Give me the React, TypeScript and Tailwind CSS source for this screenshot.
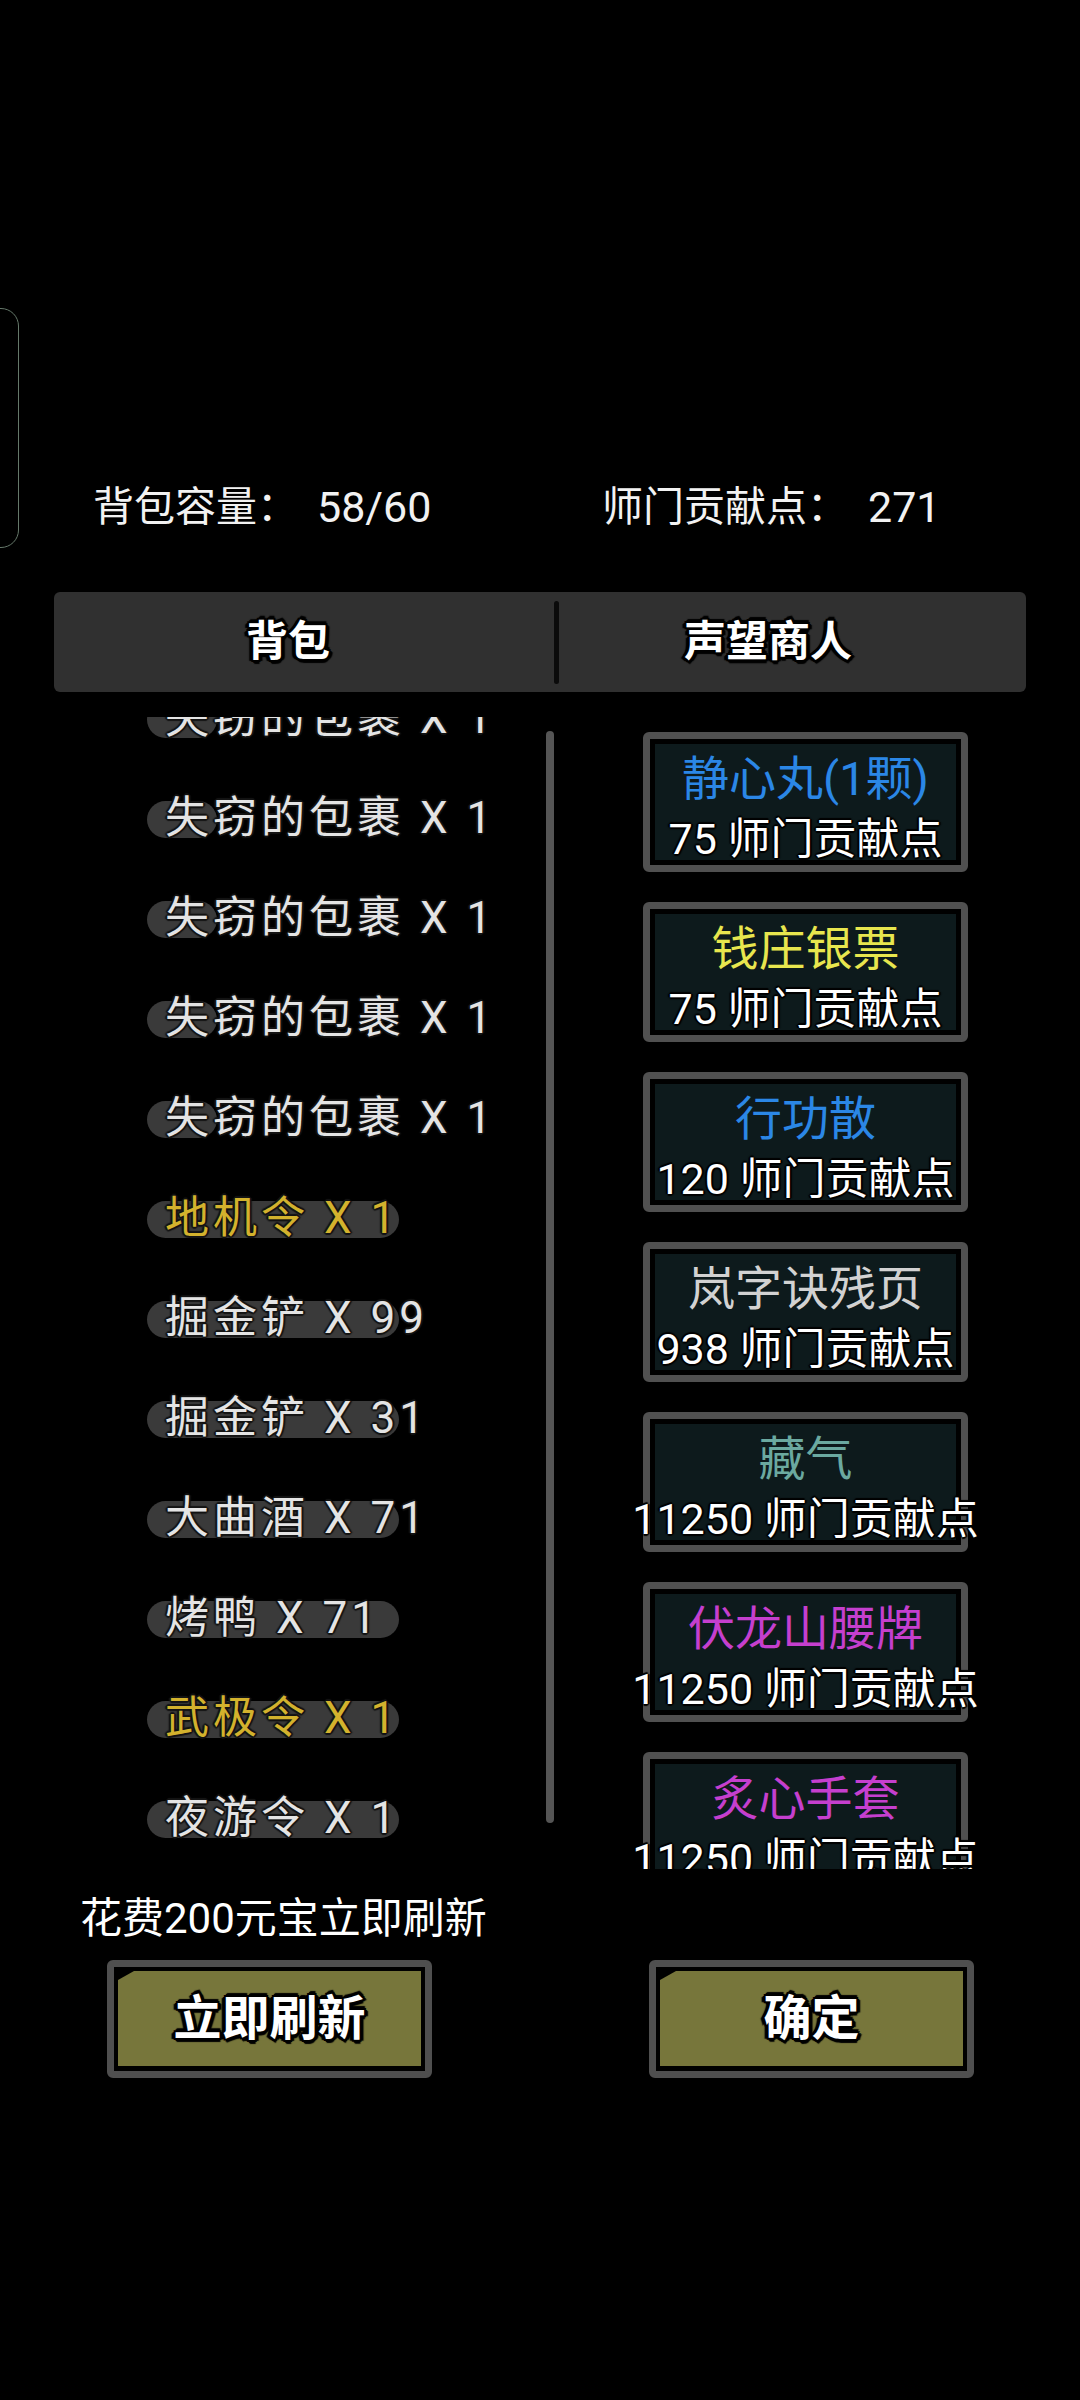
import React from "react";

const items: { name: string; gold?: boolean; pill: number }[] = [
  { name: "失窃的包裹 X 1", pill: 70 },
  { name: "失窃的包裹 X 1", pill: 70 },
  { name: "失窃的包裹 X 1", pill: 70 },
  { name: "失窃的包裹 X 1", pill: 70 },
  { name: "失窃的包裹 X 1", pill: 70 },
  { name: "地机令 X 1", gold: true, pill: 252 },
  { name: "掘金铲 X 99", pill: 252 },
  { name: "掘金铲 X 31", pill: 252 },
  { name: "大曲酒 X 71", pill: 252 },
  { name: "烤鸭 X 71", pill: 252 },
  { name: "武极令 X 1", gold: true, pill: 252 },
  { name: "夜游令 X 1", pill: 252 },
];

const goods: { name: string; color: string; price: string }[] = [
  { name: "静心丸(1颗)", color: "text-[#2b87e6]", price: "75 师门贡献点" },
  { name: "钱庄银票", color: "text-[#e8e64e]", price: "75 师门贡献点" },
  { name: "行功散", color: "text-[#2b87e6]", price: "120 师门贡献点" },
  { name: "岚字诀残页", color: "text-[#d2d2d2]", price: "938 师门贡献点" },
  { name: "藏气", color: "text-[#6ba9a0]", price: "11250 师门贡献点" },
  { name: "伏龙山腰牌", color: "text-[#c53fce]", price: "11250 师门贡献点" },
  { name: "炙心手套", color: "text-[#c53fce]", price: "11250 师门贡献点" },
];

const itemShadow =
  "[text-shadow:2px_0_1px_#141414,-2px_0_1px_#141414,0_2px_1px_#141414,0_-2px_1px_#141414,1px_1px_1px_#141414,-1px_-1px_1px_#141414,1px_-1px_1px_#141414,-1px_1px_1px_#141414]";
const strongShadow =
  "[text-shadow:3px_0_0_#000,-3px_0_0_#000,0_3px_0_#000,0_-3px_0_#000,2px_2px_0_#000,-2px_-2px_0_#000,2px_-2px_0_#000,-2px_2px_0_#000,4px_1px_1px_#000,-4px_1px_1px_#000,1px_4px_1px_#000,1px_-4px_1px_#000]";
const priceShadow =
  "[text-shadow:2px_0_1px_#000,-2px_0_1px_#000,0_2px_1px_#000,0_-2px_1px_#000,1px_1px_1px_#000,-1px_-1px_1px_#000]";

function OliveButton({ label }: { label: string }) {
  return (
    <div className="w-[325px] h-[118px] rounded-[6px] border-[7px] border-[#4f4f4f] bg-black px-[4px] pt-[4px] pb-[5px]">
      <div className="w-full h-full bg-[#77763b] [clip-path:polygon(16px_0,100%_0,100%_100%,0_100%,0_9px)] flex items-center justify-center">
        <span className={`text-[48px] leading-none font-bold text-white ${strongShadow}`}>{label}</span>
      </div>
    </div>
  );
}

export default function App() {
  return (
    <div className="relative w-[1080px] h-[2400px] bg-black overflow-hidden text-white font-['Roboto','Noto_Sans_CJK_SC',sans-serif]">
      {/* side element */}
      <div className="absolute left-[-40px] top-[308px] w-[59px] h-[240px] rounded-[18px] border-[1.5px] border-[#65786a]"></div>

      {/* header */}
      <div className="pt-[482px] flex h-[532px] items-center pl-[93px] text-[41px] leading-[50px] text-[#f2f2f2]">
        <div className="w-[509px] flex items-center">
          <span>背包容量：</span>
          <span className="ml-[19px] text-[43px]">58/60</span>
        </div>
        <div className="flex items-center">
          <span>师门贡献点：</span>
          <span className="ml-[20px] text-[43px]">271</span>
        </div>
      </div>

      {/* tabs */}
      <div className="mt-[60px] ml-[54px] w-[972px] h-[100px] rounded-[6px] bg-[#303030] flex items-center">
        <div className="w-[500px] flex justify-center pr-[32px]">
          <span className={`text-[42px] leading-none font-bold text-white ${strongShadow}`}>背包</span>
        </div>
        <div className="w-[5px] h-[83px] rounded-full bg-[#0b0b0b]"></div>
        <div className="flex-1 flex justify-center pr-[49px]">
          <span className={`text-[42px] leading-none font-bold text-white ${strongShadow}`}>声望商人</span>
        </div>
      </div>

      {/* lists */}
      <div className="mt-[25px] h-[1152px] flex">
        <div className="w-[546px] h-full overflow-hidden">
          <div className="-mt-[49px] flex flex-col">
            {items.map((it, i) => (
              <div key={i} className="h-[100px] flex items-center pl-[165px]">
                <span className="relative whitespace-nowrap">
                  <span
                    className="absolute -left-[18px] top-[9px] h-[37px] rounded-full bg-[#3a3a3a]"
                    style={{ width: it.pill }}
                  ></span>
                  <span
                    className={`relative text-[44px] leading-[52px] tracking-[4px] ${itemShadow} ${
                      it.gold ? "text-[#d3b22d]" : "text-[#e4e4e4]"
                    }`}
                  >
                    {it.name}
                  </span>
                </span>
              </div>
            ))}
          </div>
        </div>
        <div className="w-[8px] mt-[14px] h-[1092px] rounded-full bg-[#555555]"></div>
        <div className="ml-[69px] w-[365px] px-[20px] h-full overflow-hidden">
          <div className="pt-[15px] flex flex-col gap-[30px]">
            {goods.map((g, i) => (
              <div
                key={i}
                className="w-[325px] h-[140px] shrink-0 rounded-[6px] border-[7px] border-[#505050] bg-black p-[5px]"
              >
                <div className="w-full h-full bg-[#0d1a1c] flex flex-col items-center pt-[5px]">
                  <div className={`h-[60px] leading-[60px] text-[47px] whitespace-nowrap ${g.color}`}>{g.name}</div>
                  <div className={`h-[60px] leading-[60px] text-[43px] whitespace-nowrap text-white ${priceShadow}`}>
                    {g.price}
                  </div>
                </div>
              </div>
            ))}
          </div>
        </div>
      </div>

      {/* bottom */}
      <div className="mt-[25px] pl-[80px] h-[50px] leading-[50px] text-[42px] text-white">花费200元宝立即刷新</div>
      <div className="mt-[16px] pl-[107px] flex gap-[217px]">
        <OliveButton label="立即刷新" />
        <OliveButton label="确定" />
      </div>
    </div>
  );
}
